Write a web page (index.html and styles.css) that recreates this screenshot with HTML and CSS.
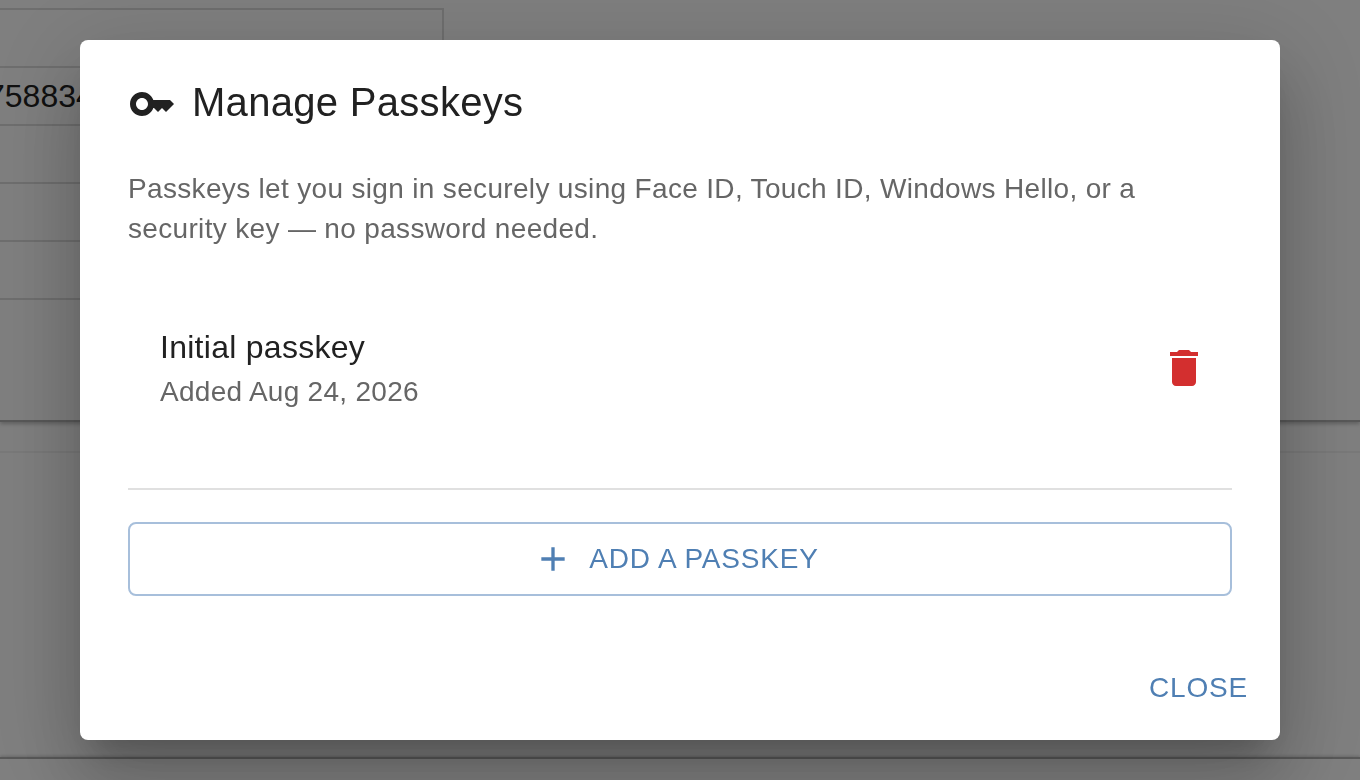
FILE: index.html
```html
<!DOCTYPE html>
<html lang="en">
  <head>
    <meta charset="UTF-8">
    <title>Manage Passkeys</title>
    <link rel="stylesheet" href="styles.css">
  </head>
  <body>
    <div class="page">
      <div class="panel">
        <div class="field-top"></div>
        <div class="field-row"><span class="field-value">758834</span></div>
        <div class="field-row"></div>
        <div class="field-row"></div>
        <div class="field-row"></div>
        <div class="field-row"></div>
      </div>
      <div class="section"></div>
      <div class="footer-bar"></div>
    </div>

    <div class="backdrop">
      <div class="dialog">
        <div class="dialog-title">
          <svg class="title-icon" viewBox="0 0 24 24">
            <path d="M21 10h-8.35C11.83 7.67 9.61 6 7 6c-3.31 0-6 2.69-6 6s2.69 6 6 6c2.61 0 4.83-1.67 5.65-4H13l2 2 2-2 2 2 4-4.04L21 10zM7 15c-1.65 0-3-1.35-3-3s1.35-3 3-3 3 1.35 3 3-1.35 3-3 3z"/>
          </svg>
          <h2>Manage Passkeys</h2>
        </div>
        <p class="description">Passkeys let you sign in securely using Face ID, Touch ID, Windows Hello, or a security key — no password needed.</p>
        <div class="passkey-item">
          <div class="passkey-text">
            <div class="passkey-name">Initial passkey</div>
            <div class="passkey-date">Added Aug 24, 2026</div>
          </div>
          <svg class="delete-icon" viewBox="0 0 24 24">
            <path d="M6 19c0 1.1.9 2 2 2h8c1.1 0 2-.9 2-2V7H6v12zM19 4h-3.5l-1-1h-5l-1 1H5v2h14V4z"/>
          </svg>
        </div>
        <div class="divider"></div>
        <button class="add-button">
          <svg class="plus-icon" viewBox="0 0 24 24">
            <path d="M19 13h-6v6h-2v-6H5v-2h6V5h2v6h6v2z"/>
          </svg>
          ADD A PASSKEY
        </button>
        <div class="dialog-actions">
          <button class="close-button">CLOSE</button>
        </div>
      </div>
    </div>
  </body>
</html>
```

FILE: styles.css
```css
* {
  box-sizing: border-box;
}

html, body {
  height: 100%;
}

body {
  margin: 0;
  background: #fff;
  color: #212121;
  font-family: "Liberation Sans", Arial, sans-serif;
  overflow: hidden;
}

.page {
  height: 780px;
  display: flex;
  flex-direction: column;
}

.panel {
  flex: none;
  height: 422px;
  padding-top: 8px;
  border-bottom: 2px solid #b0b0b0;
  box-shadow: 0 2px 4px rgba(0, 0, 0, 0.25);
}

.field-top {
  width: 444px;
  height: 58px;
  border: 2px solid #ddd;
  border-left: 0;
  border-bottom: 0;
}

.field-row {
  width: 444px;
  height: 58px;
  overflow: hidden;
  border-top: 2px solid #ddd;
}

.field-value {
  display: block;
  margin-left: -13px;
  padding-top: 8px;
  font-size: 32px;
  line-height: 40px;
  white-space: nowrap;
}

.section {
  flex: none;
  height: 306px;
  margin-top: 29px;
  border-top: 2px solid #f2f2f2;
}

.footer-bar {
  flex: 1;
  border-top: 2px solid #b0b0b0;
  box-shadow: 0 -1px 3px rgba(0, 0, 0, 0.2);
}

.backdrop {
  position: fixed;
  inset: 0;
  display: flex;
  align-items: center;
  justify-content: center;
  background: rgba(0, 0, 0, 0.5);
}

.dialog {
  width: 1200px;
  height: 700px;
  display: flex;
  flex-direction: column;
  padding: 0 48px;
  background: #fff;
  border-radius: 8px;
  box-shadow: 0 22px 30px -14px rgba(0, 0, 0, 0.2), 0 48px 76px 6px rgba(0, 0, 0, 0.14), 0 18px 92px 16px rgba(0, 0, 0, 0.12);
}

.dialog-title {
  display: flex;
  align-items: center;
  gap: 16px;
  height: 48px;
  margin-top: 38px;
}

.title-icon {
  flex: none;
  width: 48px;
  height: 48px;
  margin-top: 4px;
  fill: #212121;
}

.dialog-title h2 {
  margin: 0;
  font-size: 40px;
  font-weight: 400;
  letter-spacing: 0.3px;
  line-height: 48px;
}

.description {
  margin: 43px 0 0;
  font-size: 28px;
  letter-spacing: 0.33px;
  line-height: 40px;
  color: #666;
}

.passkey-item {
  display: flex;
  align-items: center;
  justify-content: space-between;
  height: 160px;
  margin-top: 38px;
  padding: 0 24px 0 32px;
}

.passkey-text {
  padding-top: 3px;
}

.passkey-name {
  font-size: 32px;
  letter-spacing: 0.27px;
  line-height: 44px;
}

.passkey-date {
  margin-top: 3px;
  font-size: 28px;
  letter-spacing: 0.28px;
  line-height: 40px;
  color: #666;
}

.delete-icon {
  width: 48px;
  height: 48px;
  margin-top: 2px;
  fill: #d32f2f;
}

.divider {
  height: 2px;
  margin-top: 41px;
  background: #e0e0e0;
}

.add-button {
  display: flex;
  align-items: center;
  justify-content: center;
  gap: 16px;
  height: 74px;
  margin-top: 32px;
  padding: 0 8px 0 0;
  font: inherit;
  font-size: 28px;
  letter-spacing: 0.8px;
  color: #4f7fb3;
  background: #fff;
  border: 2px solid #a7bfdb;
  border-radius: 8px;
}

.plus-icon {
  width: 40px;
  height: 40px;
  fill: #4f7fb3;
}

.dialog-actions {
  display: flex;
  justify-content: flex-end;
  margin-top: auto;
  margin-right: -16px;
  padding-bottom: 30px;
}

.close-button {
  padding: 0;
  font: inherit;
  font-size: 28px;
  letter-spacing: 0.8px;
  line-height: 44px;
  color: #4f7fb3;
  background: none;
  border: 0;
}
```
